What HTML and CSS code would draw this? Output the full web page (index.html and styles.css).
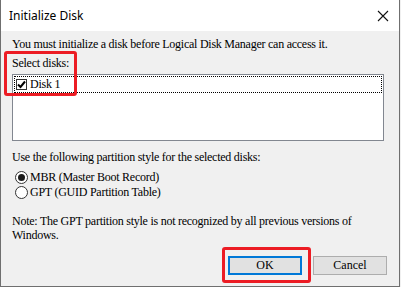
FILE: index.html
```html
<!DOCTYPE html>
<html lang="en">
<head>
    <meta charset="UTF-8">
    <title>Initialize Disk</title>
    <link rel="stylesheet" href="styles.css">
</head>
<body>
    <div class="window">
        <div class="titlebar">
            <span class="title">Initialize Disk</span>
            <svg class="close" width="12" height="12" viewBox="0 0 12 12">
                <path d="M1 1 L11 11 M11 1 L1 11" stroke="#111" stroke-width="1.1" fill="none"/>
            </svg>
        </div>
        <div class="content">
            <p class="line intro">You must initialize a disk before Logical Disk Manager can access it.</p>
            <p class="line select">Select disks:</p>
            <div class="listbox">
                <div class="list-item">
                    <span class="checkbox">
                        <svg width="9" height="9" viewBox="0 0 9 9">
                            <path d="M1 4.5 L3.5 7 L8 1.5" stroke="#000" stroke-width="2" fill="none"/>
                        </svg>
                    </span>
                    <span>Disk 1</span>
                </div>
            </div>
            <p class="line style-label">Use the following partition style for the selected disks:</p>
            <div class="radios">
                <label class="radio-row"><span class="radio checked"></span>MBR (Master Boot Record)</label>
                <label class="radio-row"><span class="radio"></span>GPT (GUID Partition Table)</label>
            </div>
            <p class="note">Note: The GPT partition style is not recognized by all previous versions of Windows.</p>
            <div class="buttons">
                <button class="btn default">OK</button>
                <button class="btn">Cancel</button>
            </div>
        </div>
        <div class="mark mark-select"></div>
        <div class="mark mark-ok"></div>
    </div>
</body>
</html>
```

FILE: styles.css
```css
body {
    margin: 0;
    background: #f0f0f0;
}
.window {
    position: relative;
    width: 400px;
    height: 287px;
    box-sizing: border-box;
    border: 1px solid #6f6f6f;
    border-top: none;
    background: #f0f0f0;
    font-family: "Liberation Serif", serif;
    font-size: 12px;
    letter-spacing: -0.25px;
    color: #000;
}
.titlebar {
    height: 31px;
    background: #fff;
    display: flex;
    align-items: center;
    justify-content: space-between;
    padding: 0 10px 0 8px;
}
.title {
    font-family: "Noto Sans", sans-serif;
    font-size: 12px;
    letter-spacing: 0;
}
.content {
    padding: 6px 11px 0 11px;
}
.line {
    margin: 0;
    line-height: 15px;
}
.select {
    margin-top: 4px;
}
.listbox {
    margin-top: 3px;
    width: 372px;
    height: 67px;
    box-sizing: border-box;
    border: 1px solid #828790;
    background: #fff;
    padding: 1px;
}
.list-item {
    display: flex;
    align-items: center;
    gap: 3px;
    height: 15px;
    border: 1px dotted #000;
    padding-left: 1px;
}
.checkbox {
    width: 11px;
    height: 11px;
    box-sizing: border-box;
    border: 1px solid #333;
    display: flex;
    align-items: center;
    justify-content: center;
    background: #fff;
}
.style-label {
    margin-top: 9px;
}
.radios {
    margin-top: 5px;
}
.radio-row {
    display: flex;
    align-items: center;
    gap: 2px;
    height: 15px;
    padding-left: 3px;
}
.radio {
    width: 13px;
    height: 13px;
    box-sizing: border-box;
    border: 1px solid #333;
    border-radius: 50%;
    background: #fff;
    display: flex;
    align-items: center;
    justify-content: center;
}
.radio.checked::after {
    content: "";
    width: 7px;
    height: 7px;
    border-radius: 50%;
    background: #1a1a1a;
}
.note {
    margin: 14px 0 0 0;
    line-height: 14px;
    width: 360px;
}
.buttons {
    display: flex;
    justify-content: flex-end;
    gap: 11px;
    margin-top: 14px;
    padding-right: 1px;
}
.btn {
    width: 74px;
    height: 19px;
    box-sizing: border-box;
    border: 1px solid #adadad;
    background: #e1e1e1;
    font-family: "Liberation Serif", serif;
    font-size: 12px;
    padding: 0;
}
.btn.default {
    border: 2px solid #0078d7;
}
.mark {
    position: absolute;
    border: 3px solid #ec1c24;
    border-radius: 3px;
}
.mark-select {
    left: 3px;
    top: 51px;
    width: 67px;
    height: 39px;
}
.mark-ok {
    left: 221px;
    top: 247px;
    width: 83px;
    height: 30px;
}
```
